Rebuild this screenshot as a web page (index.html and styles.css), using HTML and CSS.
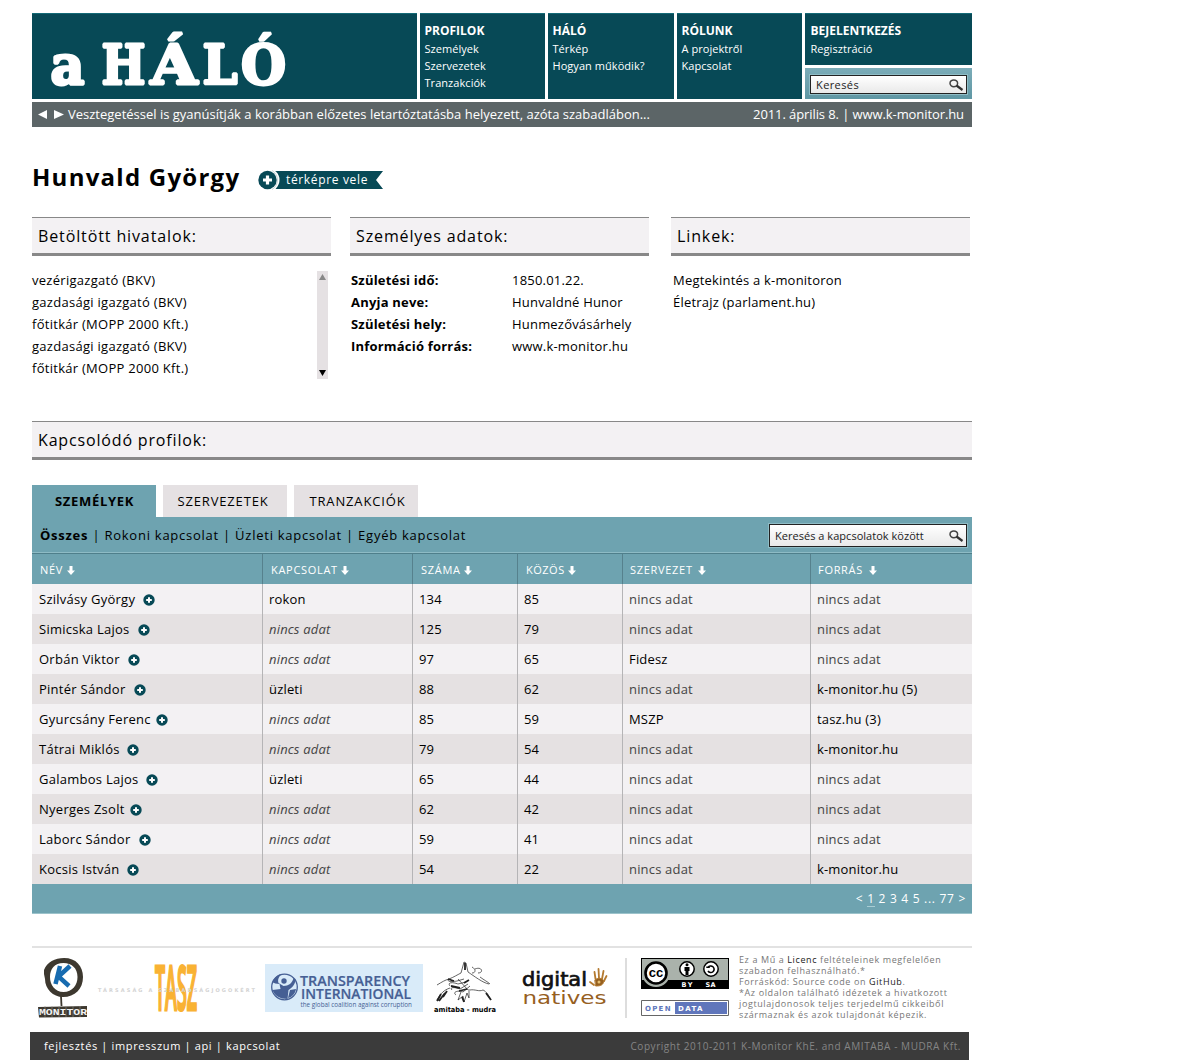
FILE: index.html
```html
<!DOCTYPE html>
<html lang="hu">
<head>
<meta charset="utf-8">
<title>a HÁLÓ – Hunvald György</title>
<link rel="stylesheet" href="styles.css">
</head>
<body>
<svg class="defs" width="0" height="0" aria-hidden="true">
  <symbol id="plus" viewBox="0 0 12 12"><circle cx="6" cy="6" r="5.7" fill="#074956"/><path d="M6 3.2v5.6M3.2 6h5.6" stroke="#fff" stroke-width="2"/></symbol>
  <symbol id="down" viewBox="0 0 8 9"><path d="M2.5 0h3v4.5H8L4 9 0 4.5h2.500z" fill="#fff"/></symbol>
  <symbol id="lens" viewBox="0 0 15 12"><ellipse cx="4.800" cy="4.300" rx="3.800" ry="3.400" fill="none" stroke="#444" stroke-width="1.500"/><path d="M7.500 6.500l6 4.500" stroke="#333" stroke-width="2.200"/></symbol>
</svg>
<div class="page">
  <header class="top">
    <a class="brand">
      <svg width="385" height="86" viewBox="32 13 385 86">
        <g class="wordmark">
          <text x="50.500" y="83.500" textLength="34" lengthAdjust="spacingAndGlyphs">a</text>
          <text x="101.500" y="83.500" textLength="44" lengthAdjust="spacingAndGlyphs">H</text>
          <text x="150.500" y="83.500" textLength="47" lengthAdjust="spacingAndGlyphs">Á</text>
          <text x="202.500" y="83.500" textLength="35" lengthAdjust="spacingAndGlyphs">L</text>
          <text x="241" y="83.500" textLength="45" lengthAdjust="spacingAndGlyphs">Ó</text>
        </g>
      </svg>
    </a>
    <nav class="menu"><h2>PROFILOK</h2><a>Személyek</a><a>Szervezetek</a><a>Tranzakciók</a></nav>
    <nav class="menu"><h2>HÁLÓ</h2><a>Térkép</a><a>Hogyan működik?</a></nav>
    <nav class="menu"><h2>RÓLUNK</h2><a>A projektről</a><a>Kapcsolat</a></nav>
    <div class="account">
      <nav class="menu login"><h2>BEJELENTKEZÉS</h2><a>Regisztráció</a></nav>
      <div class="sitesearch"><div class="field"><span>Keresés</span><svg width="15" height="12"><use href="#lens"/></svg></div></div>
    </div>
  </header>
  <div class="ticker">
    <svg width="26" height="9" viewBox="0 0 26 9"><path d="M9 0v9L0 4.500zM16 0v9l10-4.500z" fill="#fff"/></svg>
    <span class="news">Vesztegetéssel is gyanúsítják a korábban előzetes letartóztatásba helyezett, azóta szabadlábon...</span>
    <span class="date">2011. április 8. | www.k-monitor.hu</span>
  </div>

  <div class="title">
    <h1>Hunvald György</h1>
    <a class="ribbon">
      <svg width="26" height="24" viewBox="0 0 26 24"><path d="M11 3h15v18H11z" fill="#074956"/><circle cx="11" cy="12" r="11.500" fill="#fff"/><path d="M15 2.500a11 11 0 0 1 0 19" fill="none" stroke="#bccdd1" stroke-width=".8"/><circle cx="10.500" cy="12" r="9.200" fill="#074956"/><path d="M10.500 7.500v9M6 12h9" stroke="#fff" stroke-width="3.200"/></svg>
      <span>térképre vele</span>
    </a>
  </div>

  <div class="facts">
    <section>
      <h3>Betöltött hivatalok:</h3>
      <div class="offices">
        <ul><li>vezérigazgató (BKV)</li><li>gazdasági igazgató (BKV)</li><li>főtitkár (MOPP 2000 Kft.)</li><li>gazdasági igazgató (BKV)</li><li>főtitkár (MOPP 2000 Kft.)</li></ul>
        <div class="scroll"><svg width="7" height="6"><path d="M0 6h7L3.500 0z" fill="#888"/></svg><svg width="7" height="6"><path d="M0 0h7L3.500 6z" fill="#000"/></svg></div>
      </div>
    </section>
    <section>
      <h3>Személyes adatok:</h3>
      <dl><dt>Születési idő:</dt><dd>1850.01.22.</dd><dt>Anyja neve:</dt><dd>Hunvaldné Hunor</dd><dt>Születési hely:</dt><dd>Hunmezővásárhely</dd><dt>Információ forrás:</dt><dd>www.k-monitor.hu</dd></dl>
    </section>
    <section>
      <h3>Linkek:</h3>
      <ul class="links"><li>Megtekintés a k-monitoron</li><li>Életrajz (parlament.hu)</li></ul>
    </section>
  </div>

  <h3 class="related">Kapcsolódó profilok:</h3>
  <div class="tabs"><a class="on">SZEMÉLYEK</a><a class="t2">SZERVEZETEK</a><a class="t3">TRANZAKCIÓK</a></div>
  <div class="filter">
    <p><b>Összes</b> | <a>Rokoni kapcsolat</a> | <a>Üzleti kapcsolat</a> | <a>Egyéb kapcsolat</a></p>
    <div class="field"><span>Keresés a kapcsolatok között</span><svg width="15" height="12"><use href="#lens"/></svg></div>
  </div>
  <table>
    <colgroup><col class="c1"><col class="c2"><col class="c3"><col class="c4"><col class="c5"><col class="c6"></colgroup>
    <thead><tr>
      <th>NÉV<svg width="8" height="9"><use href="#down"/></svg></th>
      <th>KAPCSOLAT<svg width="8" height="9"><use href="#down"/></svg></th>
      <th>SZÁMA<svg width="8" height="9"><use href="#down"/></svg></th>
      <th class="tight">KÖZÖS<svg width="8" height="9"><use href="#down"/></svg></th>
      <th class="wide">SZERVEZET<svg width="8" height="9"><use href="#down"/></svg></th>
      <th class="wide">FORRÁS<svg width="8" height="9"><use href="#down"/></svg></th>
    </tr></thead>
    <tbody>
      <tr><td>Szilvásy György<svg><use href="#plus"/></svg></td><td>rokon</td><td>134</td><td>85</td><td class="na">nincs adat</td><td class="na">nincs adat</td></tr>
      <tr><td>Simicska Lajos<svg><use href="#plus"/></svg></td><td class="na"><i>nincs adat</i></td><td>125</td><td>79</td><td class="na">nincs adat</td><td class="na">nincs adat</td></tr>
      <tr><td>Orbán Viktor<svg><use href="#plus"/></svg></td><td class="na"><i>nincs adat</i></td><td>97</td><td>65</td><td>Fidesz</td><td class="na">nincs adat</td></tr>
      <tr><td>Pintér Sándor<svg><use href="#plus"/></svg></td><td>üzleti</td><td>88</td><td>62</td><td class="na">nincs adat</td><td>k-monitor.hu (5)</td></tr>
      <tr><td>Gyurcsány Ferenc<svg class="near"><use href="#plus"/></svg></td><td class="na"><i>nincs adat</i></td><td>85</td><td>59</td><td>MSZP</td><td>tasz.hu (3)</td></tr>
      <tr><td>Tátrai Miklós<svg class="mid"><use href="#plus"/></svg></td><td class="na"><i>nincs adat</i></td><td>79</td><td>54</td><td class="na">nincs adat</td><td>k-monitor.hu</td></tr>
      <tr><td>Galambos Lajos<svg class="mid"><use href="#plus"/></svg></td><td>üzleti</td><td>65</td><td>44</td><td class="na">nincs adat</td><td class="na">nincs adat</td></tr>
      <tr><td>Nyerges Zsolt<svg class="near"><use href="#plus"/></svg></td><td class="na"><i>nincs adat</i></td><td>62</td><td>42</td><td class="na">nincs adat</td><td class="na">nincs adat</td></tr>
      <tr><td>Laborc Sándor<svg><use href="#plus"/></svg></td><td class="na"><i>nincs adat</i></td><td>59</td><td>41</td><td class="na">nincs adat</td><td class="na">nincs adat</td></tr>
      <tr><td>Kocsis István<svg class="mid"><use href="#plus"/></svg></td><td class="na"><i>nincs adat</i></td><td>54</td><td>22</td><td class="na">nincs adat</td><td>k-monitor.hu</td></tr>
    </tbody>
  </table>
  <div class="pager">&lt; <u>1</u> 2 3 4 5 ... 77 &gt;</div>

  <footer class="partners">
    <svg width="64" height="84" viewBox="32 948 64 84">
      <path fill="#3d382f" fill-rule="evenodd" d="M44 970c3-8 11-12 20-12 12 0 19 8 19 19 0 12-8 20-20 20-10 0-18-8-18-18l-1-5zM50 977c0 8 5 15 13.500 15 9 0 14-7 14-15 0-9-6-14-14-14-9 0-13.500 6-13.500 14z"/>
      <path d="M61 996l.5 10" stroke="#3d382f" stroke-width="1.800"/>
      <path d="M60 966l-4.500 18M70 966l-11.500 10.500 10.500 9.500" fill="none" stroke="#176bb0" stroke-width="4.500"/>
      <path d="M38 1007l49-1v11l-48 .5z" fill="#3d382f"/>
      <path d="M45 1006v11M52 1006v11M59 1006v11M66 1006v11M73 1006v11M80 1006v11" stroke="#8d8a80" stroke-width=".6"/>
      <text x="39" y="1015" class="monitor" textLength="48" lengthAdjust="spacingAndGlyphs">MONITOR</text>
    </svg>
    <svg width="164" height="84" viewBox="96 948 164 84">
      <text class="tasz" transform="translate(155 1010.300) scale(1 2.300)" textLength="42" lengthAdjust="spacingAndGlyphs">TASZ</text>
      <text class="tasz-sub" x="98" y="991.500" textLength="157">TÁRSASÁG A SZABADSÁGJOGOKÉRT</text>
    </svg>
    <svg width="168" height="84" viewBox="260 948 168 84">
      <path d="M265 964h158v48H265z" fill="#d9ebf9"/>
      <circle cx="284.500" cy="987" r="12.800" fill="none" stroke="#465f94" stroke-width="1.300"/>
      <path fill="#465f94" d="M272.500 982c2-5 6-8 10-8-4 2-5 6-4 9l5 3c5 0 9-3 10-8l2 1c0 6-4 9-7 11l-1 9c-7 0-13-3-15-9l8-1-1-5c-3 0-6-1-7-2z"/>
      <circle cx="284" cy="981" r="2.700" fill="#465f94"/>
      <path d="M290 990l6-1c-1 5-4 8-8 9z" fill="#465f94"/>
      <g class="ti"><text x="300" y="986.300" textLength="110" lengthAdjust="spacingAndGlyphs">TRANSPARENCY</text><text x="301" y="999" textLength="110" lengthAdjust="spacingAndGlyphs">INTERNATIONAL</text></g>
      <text class="ti-sub" x="300.500" y="1007" textLength="111.500" lengthAdjust="spacingAndGlyphs">the global coalition against corruption</text>
    </svg>
    <svg width="74" height="84" viewBox="428 948 74 84">
      <g fill="none" stroke="#222" stroke-width=".7">
        <path d="M437 985c5-3 8-5 12-6 5-2 8-4 12-6l3-11 2 1 2 9c6 4 15 11 21 12M449 979c-3 3 3 3 8 2l7-2M450 986c-3-4 3-4 8-2l8-2M452 990c-3-3 3-3 8-1l8-5M456 995c-4-3 2-5 7-3l7-6M458 979l10 11M437 1000c4-7 7-10 13-12M461 992l-3 8 5-4 1 6 3-9 2 5 0-9M472 967c4 2 4 6 0 6M475 969c7-3 9 4 3 4M470 990c5-1 9 2 13 0 3 1 6 6 8 10M480 977c4 3 8 5 10 7"/>
        <path d="M437 1001l4-7M439 1001l6-8M443 997l4-6M486 993l5 7M465 963v7M462 997l2 5M448 979l6 2M451 986l9 2M459 991l8-2M464 983l5-3" stroke-width="1.800"/>
      </g>
      <text class="mudra" x="434" y="1011.500" textLength="62" lengthAdjust="spacingAndGlyphs">amitaba - mudra</text>
    </svg>
    <svg width="123" height="84" viewBox="502 948 123 84">
      <text class="digi" x="522" y="985.500" textLength="65" lengthAdjust="spacingAndGlyphs">digital</text>
      <text class="nat" x="522.500" y="1004" textLength="84" lengthAdjust="spacingAndGlyphs">natives</text>
      <g stroke="#b47a30" stroke-linecap="round" fill="none"><path d="M595.500 979l-1-7M599 978l-.5-9M602 979l1.500-8M604 981l2.500-5M594 985l-4-3" stroke-width="1.800"/><path d="M595 980c3-3 7-2 9 1-1 4-3 5-8 5z" fill="#96601f" stroke-width="1"/></g>
      <circle cx="599" cy="982" r="1.500" fill="#e5bd70"/>
    </svg>
    <div class="license">
      <svg width="88" height="60" viewBox="641 958 88 60">
        <path d="M641 958h88v31h-88z" fill="#000"/><path d="M642 959h86v21h-86z" fill="#aab2ab"/>
        <circle cx="656" cy="973" r="14" fill="#aab2ab"/>
        <circle cx="656" cy="973" r="10.500" fill="#fff" stroke="#000" stroke-width="2.600"/>
        <text class="cc" x="648.700" y="977" textLength="14.500" lengthAdjust="spacingAndGlyphs">cc</text>
        <circle cx="687" cy="969" r="7.200" fill="#fff" stroke="#000" stroke-width="1.500"/>
        <circle cx="687" cy="964.700" r="1.500"/><path d="M684.500 967h5v4H688.500v4h-3v-4h-1z"/>
        <circle cx="711" cy="969" r="7.200" fill="#fff" stroke="#000" stroke-width="1.500"/>
        <path d="M708 967.500a3.300 3.300 0 1 1 0 3.500M706.300 967.200h3.500" fill="none" stroke="#000" stroke-width="1.600"/>
        <text class="by" x="681.500" y="987" textLength="11">BY</text><text class="by" x="705.500" y="987" textLength="10">SA</text>
        <path d="M641.500 1000.500h87v15h-87z" fill="#fff" stroke="#666"/><path d="M675 1002h52v12h-52z" fill="#6076bb"/>
        <text class="open" x="645" y="1011" textLength="25.500">OPEN</text><text class="open data" x="678" y="1011" textLength="24.500">DATA</text>
      </svg>
      <p>Ez a Mű a <a>Licenc</a> feltételeinek megfelelően<br>szabadon felhasználható.*<br>Forráskód: Source code on <a>GitHub</a>.<br>*Az oldalon található idézetek a hivatkozott<br>jogtulajdonosok teljes terjedelmű cikkeiből<br>származnak és azok tulajdonát képezik.</p>
    </div>
  </footer>
</div>
<div class="bottom"><span class="bl">fejlesztés | impresszum | api | kapcsolat</span><span class="copy">Copyright 2010-2011 K-Monitor KhE. and AMITABA - MUDRA Kft.</span></div>
</body>
</html>
```
FILE: styles.css
```css
* { box-sizing: border-box; }
body { margin: 0; height: 1060px; overflow: hidden; background: #fff; color: #000; font: 13px/22px "Open Sans", "Noto Sans", sans-serif; }
h1, h2, h3, p, ul, dl, dd { margin: 0; padding: 0; }
ul { list-style: none; }
svg { display: block; flex: none; overflow: visible; }
.defs { position: absolute; }
.page { width: 940px; margin-left: 32px; padding-top: 13px; }

.top { display: grid; grid-template-columns: 385px 125px 126px 125px 167px; gap: 3px; height: 86px; }
.brand, .menu { background: #074956; border-top: 1px solid #146a77; }
.brand svg { margin-top: -1px; }
.wordmark { font: bold 55px "DejaVu Serif", serif; fill: #fff; stroke: #fff; stroke-width: 3px; stroke-linejoin: bevel; }
.menu { padding: 8px 0 0 4.5px; color: #fff; }
.menu h2 { font-size: 12px; line-height: 18px; }
.menu a { display: block; font-size: 11px; line-height: 17px; letter-spacing: .05px; }
.account { display: grid; grid-template-rows: 52px 31px; gap: 3px; }
.login { padding-left: 5.5px; }
.sitesearch { background: linear-gradient(#7bacb8, #5f97a4); padding: 7px 5px 0; }
.sitesearch .field { letter-spacing: .4px; }
.field { display: flex; align-items: center; justify-content: space-between; height: 19px; border: 1px solid #222; background: linear-gradient(#fff, #e9e9e9); padding: 0 2.5px 0 5px; font-size: 11px; line-height: 17px; color: #222; box-shadow: 0 0 0 1px #8fbcc5; }

.ticker { display: flex; align-items: center; height: 25px; margin-top: 3px; padding: 0 8px 0 6px; background: #5c6567; color: #fff; }
.ticker span { line-height: 24px; margin-top: -1px; }
.ticker .news { margin-left: 4px; }
.ticker .date { margin-left: auto; letter-spacing: -.09px; }

.title { display: flex; height: 90px; padding-top: 32px; }
h1 { font-size: 24px; line-height: 36px; letter-spacing: 1.25px; }
.ribbon { display: flex; margin: 9px 0 0 16.7px; }
.ribbon span { height: 18px; margin-top: 3px; padding: 0 15px 0 3px; background: #074956; color: #fff; font-size: 12px; line-height: 17px; letter-spacing: .65px; clip-path: polygon(0 0, 100% 0, calc(100% - 7px) 50%, 100% 100%, 0 100%); }

.facts { display: grid; grid-template-columns: 299px 299px 299px; column-gap: 19px; height: 204px; letter-spacing: .2px; }
.facts section:last-child { margin: 0 -3px 0 3px; }
h3 { height: 39px; border-top: 1px solid #888; border-bottom: 3px solid #888; background: #f3f1f3; padding-left: 6px; font-size: 16px; font-weight: 400; line-height: 36px; letter-spacing: .88px; }
.related { letter-spacing: .84px; }
.offices { display: flex; justify-content: space-between; padding: 13px 3px 0 0; letter-spacing: .28px; }
.scroll { display: flex; flex-direction: column; justify-content: space-between; align-items: center; width: 11px; height: 108px; margin-top: 2px; padding: 3px 0; background: #e5e1e3; }
dl { display: grid; grid-template-columns: 161px 1fr; padding: 13px 0 0 1px; }
dt { font-weight: 700; }
.links { padding: 13px 0 0 2px; }

.tabs { display: flex; gap: 7px; margin-top: 25px; }
.tabs a { width: 124px; height: 32px; background: #e5e1e3; line-height: 33px; text-align: center; letter-spacing: .85px; }
.tabs .on { background: #6ea3b0; font-weight: 700; letter-spacing: .7px; padding-left: 1px; }
.tabs .t2 { padding-right: 4px; }
.tabs .t3 { padding-left: 3px; }
.filter { display: flex; justify-content: space-between; height: 37px; padding: 7px 5px 0 8px; background: #6ea3b0; border-bottom: 1px solid #4f7f8b; box-shadow: inset 0 -1px #8ebbc5; letter-spacing: .75px; }
.filter .field { width: 198px; height: 23px; letter-spacing: .03px; }

table { width: 940px; table-layout: fixed; border-collapse: collapse; }
.c1 { width: 230px; } .c2 { width: 150px; } .c3, .c4 { width: 105px; } .c5 { width: 188px; } .c6 { width: 162px; }
tr { height: 30px; }
th, td { padding: 0 0 0 7px; text-align: left; }
td { letter-spacing: .18px; }
td:first-child { letter-spacing: .26px; }
td + td { padding-left: 7px; box-shadow: inset 1px 0 #b5b4b6; }
th { height: 30px; background: #6ea3b0; color: #fff; font-size: 11px; font-weight: 400; line-height: 28px; letter-spacing: .7px; padding: 2px 0 0 8px; }
th + th { padding-left: 9px; box-shadow: inset 1px 0 #56818d; }
th.wide { padding-left: 8px; }
th svg { display: inline-block; margin-left: 3.5px; vertical-align: -1px; }
th.wide svg { margin-left: 5.5px; }
th.tight { letter-spacing: .5px; }
th.tight svg { margin-left: 3px; }
td { background: #f3f1f3; line-height: 30px; }
tr:nth-child(even) td { background: #e5e1e2; }
.na { color: #444; }
td svg { display: inline-block; width: 12px; height: 12px; margin-left: 8px; vertical-align: -1.5px; }
td svg.near { margin-left: 5px; }
td svg.mid { margin-left: 7px; }
.pager { height: 30px; padding-right: 6px; background: #6ea3b0; border-bottom: 1px solid #9cc3cb; color: #fff; font-size: 12px; line-height: 30px; text-align: right; letter-spacing: .7px; }
.pager u { text-decoration: none; box-shadow: inset 0 -1px #a9cdd4; }

.partners { display: flex; height: 86px; margin-top: 32px; border-top: 2px solid #e2e2e2; }
.monitor { font: bold 9px "Liberation Mono", monospace; fill: #f2f2f2; }
.tasz { font: 600 27px "Open Sans", sans-serif; fill: #f9b233; stroke: #f9b233; stroke-width: 2.4px; vector-effect: non-scaling-stroke; }
.tasz-sub { font: bold 5px "DejaVu Sans", sans-serif; fill: #d3d3d3; }
.ti { font: 600 14px "Open Sans", sans-serif; fill: #465f94; stroke: #465f94; stroke-width: .2px; }
.ti-sub { font: 7px "Open Sans", sans-serif; fill: #465f94; }
.mudra { font: bold 7px "DejaVu Sans", sans-serif; }
.digi { font: 19px "DejaVu Sans", sans-serif; fill: #111; stroke: #111; stroke-width: .7px; }
.nat { font: 18px "DejaVu Sans", sans-serif; fill: #96601f; }
.cc { font: bold 13px "Liberation Sans", sans-serif; }
.by { font: bold 6.5px "DejaVu Sans", sans-serif; fill: #fff; }
.open { font: bold 7px "DejaVu Sans", sans-serif; fill: #6076bb; }
.data { fill: #fff; }
.license { display: flex; height: 60px; margin-top: 10px; padding-left: 14px; border-left: 2px solid #ddd; }
.license p { margin: -4px 0 0 10px; color: #777; font-size: 9px; line-height: 11px; letter-spacing: .61px; white-space: nowrap; }
.license a { color: #222; }
.bottom { display: flex; justify-content: space-between; width: 939px; height: 28px; margin-left: 30px; padding: 0 8px 0 14px; background: #3b3b3b; color: #fff; font-size: 11px; line-height: 28px; letter-spacing: .65px; }
.copy { color: #858585; font-size: 10px; letter-spacing: .56px; }
```
